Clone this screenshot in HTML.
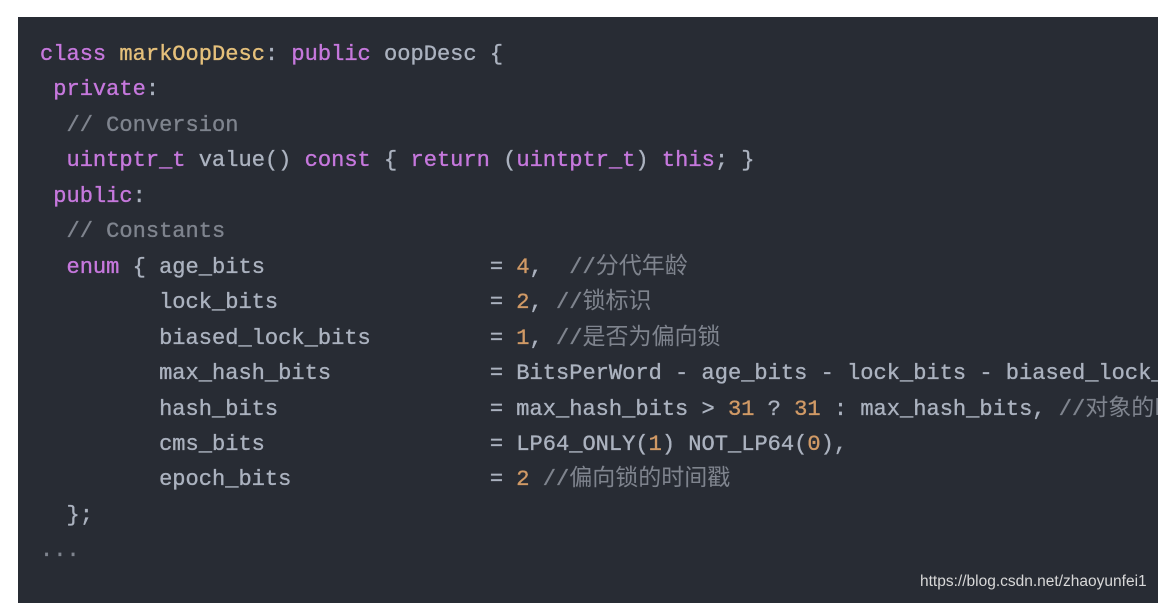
<!DOCTYPE html>
<html><head><meta charset="utf-8"><style>
html,body{margin:0;padding:0;background:#fff;width:1161px;height:603px;overflow:hidden}
.p{position:absolute;left:18px;top:17px;width:1140px;height:586px;background:#282c34;overflow:hidden}
pre{position:absolute;left:22px;top:20px;margin:0;font-family:"Liberation Mono","Noto Sans CJK SC",monospace;font-size:22.05px;line-height:35.45px;color:#abb2bf;white-space:pre;-webkit-text-stroke:0.35px currentColor}
.k{color:#c678dd}.y{color:#e5c07b}.c{color:#7f848e}.n{color:#d19a66}
.cj{font-size:23px;-webkit-text-stroke:0}
.w{position:absolute;left:920px;top:573px;font-family:"Liberation Sans",sans-serif;font-size:15.5px;color:#d8d8d8}
</style></head><body>
<div class="p"><pre><span class="k">class</span> <span class="y">markOopDesc</span>: <span class="k">public</span> oopDesc {
 <span class="k">private</span>:
  <span class="c">// Conversion</span>
  <span class="k">uintptr_t</span> value() <span class="k">const</span> { <span class="k">return</span> (<span class="k">uintptr_t</span>) <span class="k">this</span>; }
 <span class="k">public</span>:
  <span class="c">// Constants</span>
  <span class="k">enum</span> { age_bits                 = <span class="n">4</span>,  <span class="c">//<span class="cj">分代年龄</span></span>
         lock_bits                = <span class="n">2</span>, <span class="c">//<span class="cj">锁标识</span></span>
         biased_lock_bits         = <span class="n">1</span>, <span class="c">//<span class="cj">是否为偏向锁</span></span>
         max_hash_bits            = BitsPerWord - age_bits - lock_bits - biased_lock_bits,
         hash_bits                = max_hash_bits &gt; <span class="n">31</span> ? <span class="n">31</span> : max_hash_bits, <span class="c">//<span class="cj">对象的hashcode</span></span>
         cms_bits                 = LP64_ONLY(<span class="n">1</span>) NOT_LP64(<span class="n">0</span>),
         epoch_bits               = <span class="n">2</span> <span class="c">//<span class="cj">偏向锁的时间戳</span></span>
  };
<span class="c">...</span></pre></div>
<div class="w">https://blog.csdn.net/zhaoyunfei1</div>
</body></html>
